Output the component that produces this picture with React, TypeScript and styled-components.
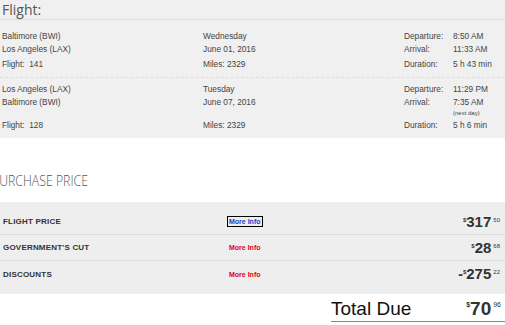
import React from "react";
import styled, { createGlobalStyle } from "styled-components";

const GlobalStyle = createGlobalStyle`
  html, body {
    margin: 0;
    padding: 0;
    background: #fff;
    overflow: hidden;
  }
  body {
    font-family: "Liberation Sans", Arial, sans-serif;
    color: #444;
  }
`;

const Page = styled.div`
  width: 505px;
`;

const FlightPanel = styled.section`
  background: #f0f0f0;
  padding: 0 0 6px 0;
`;

const PanelTitle = styled.h2`
  margin: 0;
  padding: 1px 2px 0;
  height: 18px;
  font-family: "Open Sans", "DejaVu Sans", sans-serif;
  font-weight: 400;
  font-size: 14px;
  line-height: 18px;
  color: #555;
  border-bottom: 1px solid #dcdcdc;
`;

const Segment = styled.div<{ $first?: boolean; $last?: boolean }>`
  display: grid;
  grid-template-columns: 201px 201px 1fr;
  padding: ${(p) => (p.$first ? "10px" : "5px")} 0 ${(p) => (p.$last ? "0" : "6px")} 2px;
  border-bottom: ${(p) => (p.$last ? "none" : "1px dashed #dddddd")};
  font-size: 8.3px;
  line-height: 13px;
  color: #444;
`;

const Cell = styled.div<{ $gap?: boolean }>`
  margin-top: ${(p) => (p.$gap ? "2px" : "0")};
  white-space: nowrap;
`;

const TimeCell = styled(Cell)`
  display: grid;
  grid-template-columns: 49px 1fr;
`;

const NextDay = styled.div`
  font-size: 6px;
  line-height: 8px;
`;

const SectionHeading = styled.h2`
  margin: 33px 0 0 -8px;
  height: 31px;
  font-family: "Open Sans", "DejaVu Sans", sans-serif;
  font-weight: 300;
  font-size: 15px;
  line-height: 18px;
  color: #555;
  white-space: nowrap;
  transform: scaleX(0.82);
  transform-origin: left center;
`;

const PriceTable = styled.div`
  background: #eeeeee;
  padding: 7px 0;
`;

const PriceRow = styled.div<{ $divider?: boolean }>`
  display: grid;
  grid-template-columns: 225px 1fr auto;
  align-items: center;
  height: 26px;
  padding: 0 5px 0 3px;
  border-bottom: ${(p) => (p.$divider ? "1px solid #dcdcdc" : "none")};
  box-sizing: border-box;
`;

const PriceLabel = styled.div`
  font-size: 8px;
  font-weight: 700;
  color: #333;
  letter-spacing: 0.2px;
`;

const MoreInfo = styled.a<{ $focused?: boolean }>`
  justify-self: start;
  font-size: 7px;
  font-weight: 700;
  color: ${(p) => (p.$focused ? "#1a3ccc" : "#e0001a")};
  text-decoration: none;
  padding: 1px 1px;
  outline: ${(p) => (p.$focused ? "1px solid #000" : "none")};
  outline-offset: 0;
`;

const Amount = styled.div`
  display: flex;
  align-items: flex-start;
  color: #333;
  font-weight: 700;
`;

const Sign = styled.span`
  font-size: 14px;
  line-height: 16px;
`;

const Dollar = styled.span<{ $big?: boolean }>`
  font-size: ${(p) => (p.$big ? "7px" : "6px")};
  line-height: 8px;
  margin-top: 2px;
`;

const Whole = styled.span<{ $big?: boolean }>`
  font-size: ${(p) => (p.$big ? "19px" : "15px")};
  line-height: ${(p) => (p.$big ? "20px" : "16px")};
`;

const Cents = styled.span<{ $big?: boolean }>`
  font-size: ${(p) => (p.$big ? "7px" : "6px")};
  line-height: 8px;
  margin: 2px 0 0 2px;
  font-weight: 400;
`;

const TotalRow = styled.div`
  display: flex;
  align-items: flex-end;
  justify-content: space-between;
  width: 170px;
  margin: 5px 0 0 auto;
  padding: 0 4px 2px 0;
  border-bottom: 1px solid #888;
  color: #111;
`;

const TotalLabel = styled.span`
  font-size: 19px;
  line-height: 20px;
`;

type Price = { sign?: string; whole: string; cents: string };

const Money: React.FC<Price & { big?: boolean }> = ({ sign, whole, cents, big }) => (
  <Amount>
    {sign && <Sign>{sign}</Sign>}
    <Dollar $big={big}>$</Dollar>
    <Whole $big={big}>{whole}</Whole>
    <Cents $big={big}>{cents}</Cents>
  </Amount>
);

const prices = [
  { label: "FLIGHT PRICE", focused: true, price: { whole: "317", cents: "50" } },
  { label: "GOVERNMENT'S CUT", price: { whole: "28", cents: "68" } },
  { label: "DISCOUNTS", price: { sign: "-", whole: "275", cents: "22" } },
];

const App: React.FC = () => (
  <Page>
    <GlobalStyle />
    <FlightPanel>
      <PanelTitle>Flight:</PanelTitle>
      <Segment $first>
        <Cell>Baltimore (BWI)</Cell>
        <Cell>Wednesday</Cell>
        <TimeCell>
          <span>Departure:</span>
          <span>8:50 AM</span>
        </TimeCell>
        <Cell>Los Angeles (LAX)</Cell>
        <Cell>June 01, 2016</Cell>
        <TimeCell>
          <span>Arrival:</span>
          <span>11:33 AM</span>
        </TimeCell>
        <Cell $gap>Flight:&nbsp; 141</Cell>
        <Cell $gap>Miles: 2329</Cell>
        <TimeCell $gap>
          <span>Duration:</span>
          <span>5 h 43 min</span>
        </TimeCell>
      </Segment>
      <Segment $last>
        <Cell>Los Angeles (LAX)</Cell>
        <Cell>Tuesday</Cell>
        <TimeCell>
          <span>Departure:</span>
          <span>11:29 PM</span>
        </TimeCell>
        <Cell>Baltimore (BWI)</Cell>
        <Cell>June 07, 2016</Cell>
        <TimeCell>
          <span>Arrival:</span>
          <div>
            7:35 AM
            <NextDay>(next day)</NextDay>
          </div>
        </TimeCell>
        <Cell $gap>Flight:&nbsp; 128</Cell>
        <Cell $gap>Miles: 2329</Cell>
        <TimeCell $gap>
          <span>Duration:</span>
          <span>5 h 6 min</span>
        </TimeCell>
      </Segment>
    </FlightPanel>

    <SectionHeading>PURCHASE PRICE</SectionHeading>

    <PriceTable>
      {prices.map((row, i) => (
        <PriceRow key={row.label} $divider={i < prices.length - 1}>
          <PriceLabel>{row.label}</PriceLabel>
          <MoreInfo href="#" $focused={row.focused}>
            More Info
          </MoreInfo>
          <Money {...row.price} />
        </PriceRow>
      ))}
    </PriceTable>

    <TotalRow>
      <TotalLabel>Total Due</TotalLabel>
      <Money whole="70" cents="96" big />
    </TotalRow>
  </Page>
);

export default App;
